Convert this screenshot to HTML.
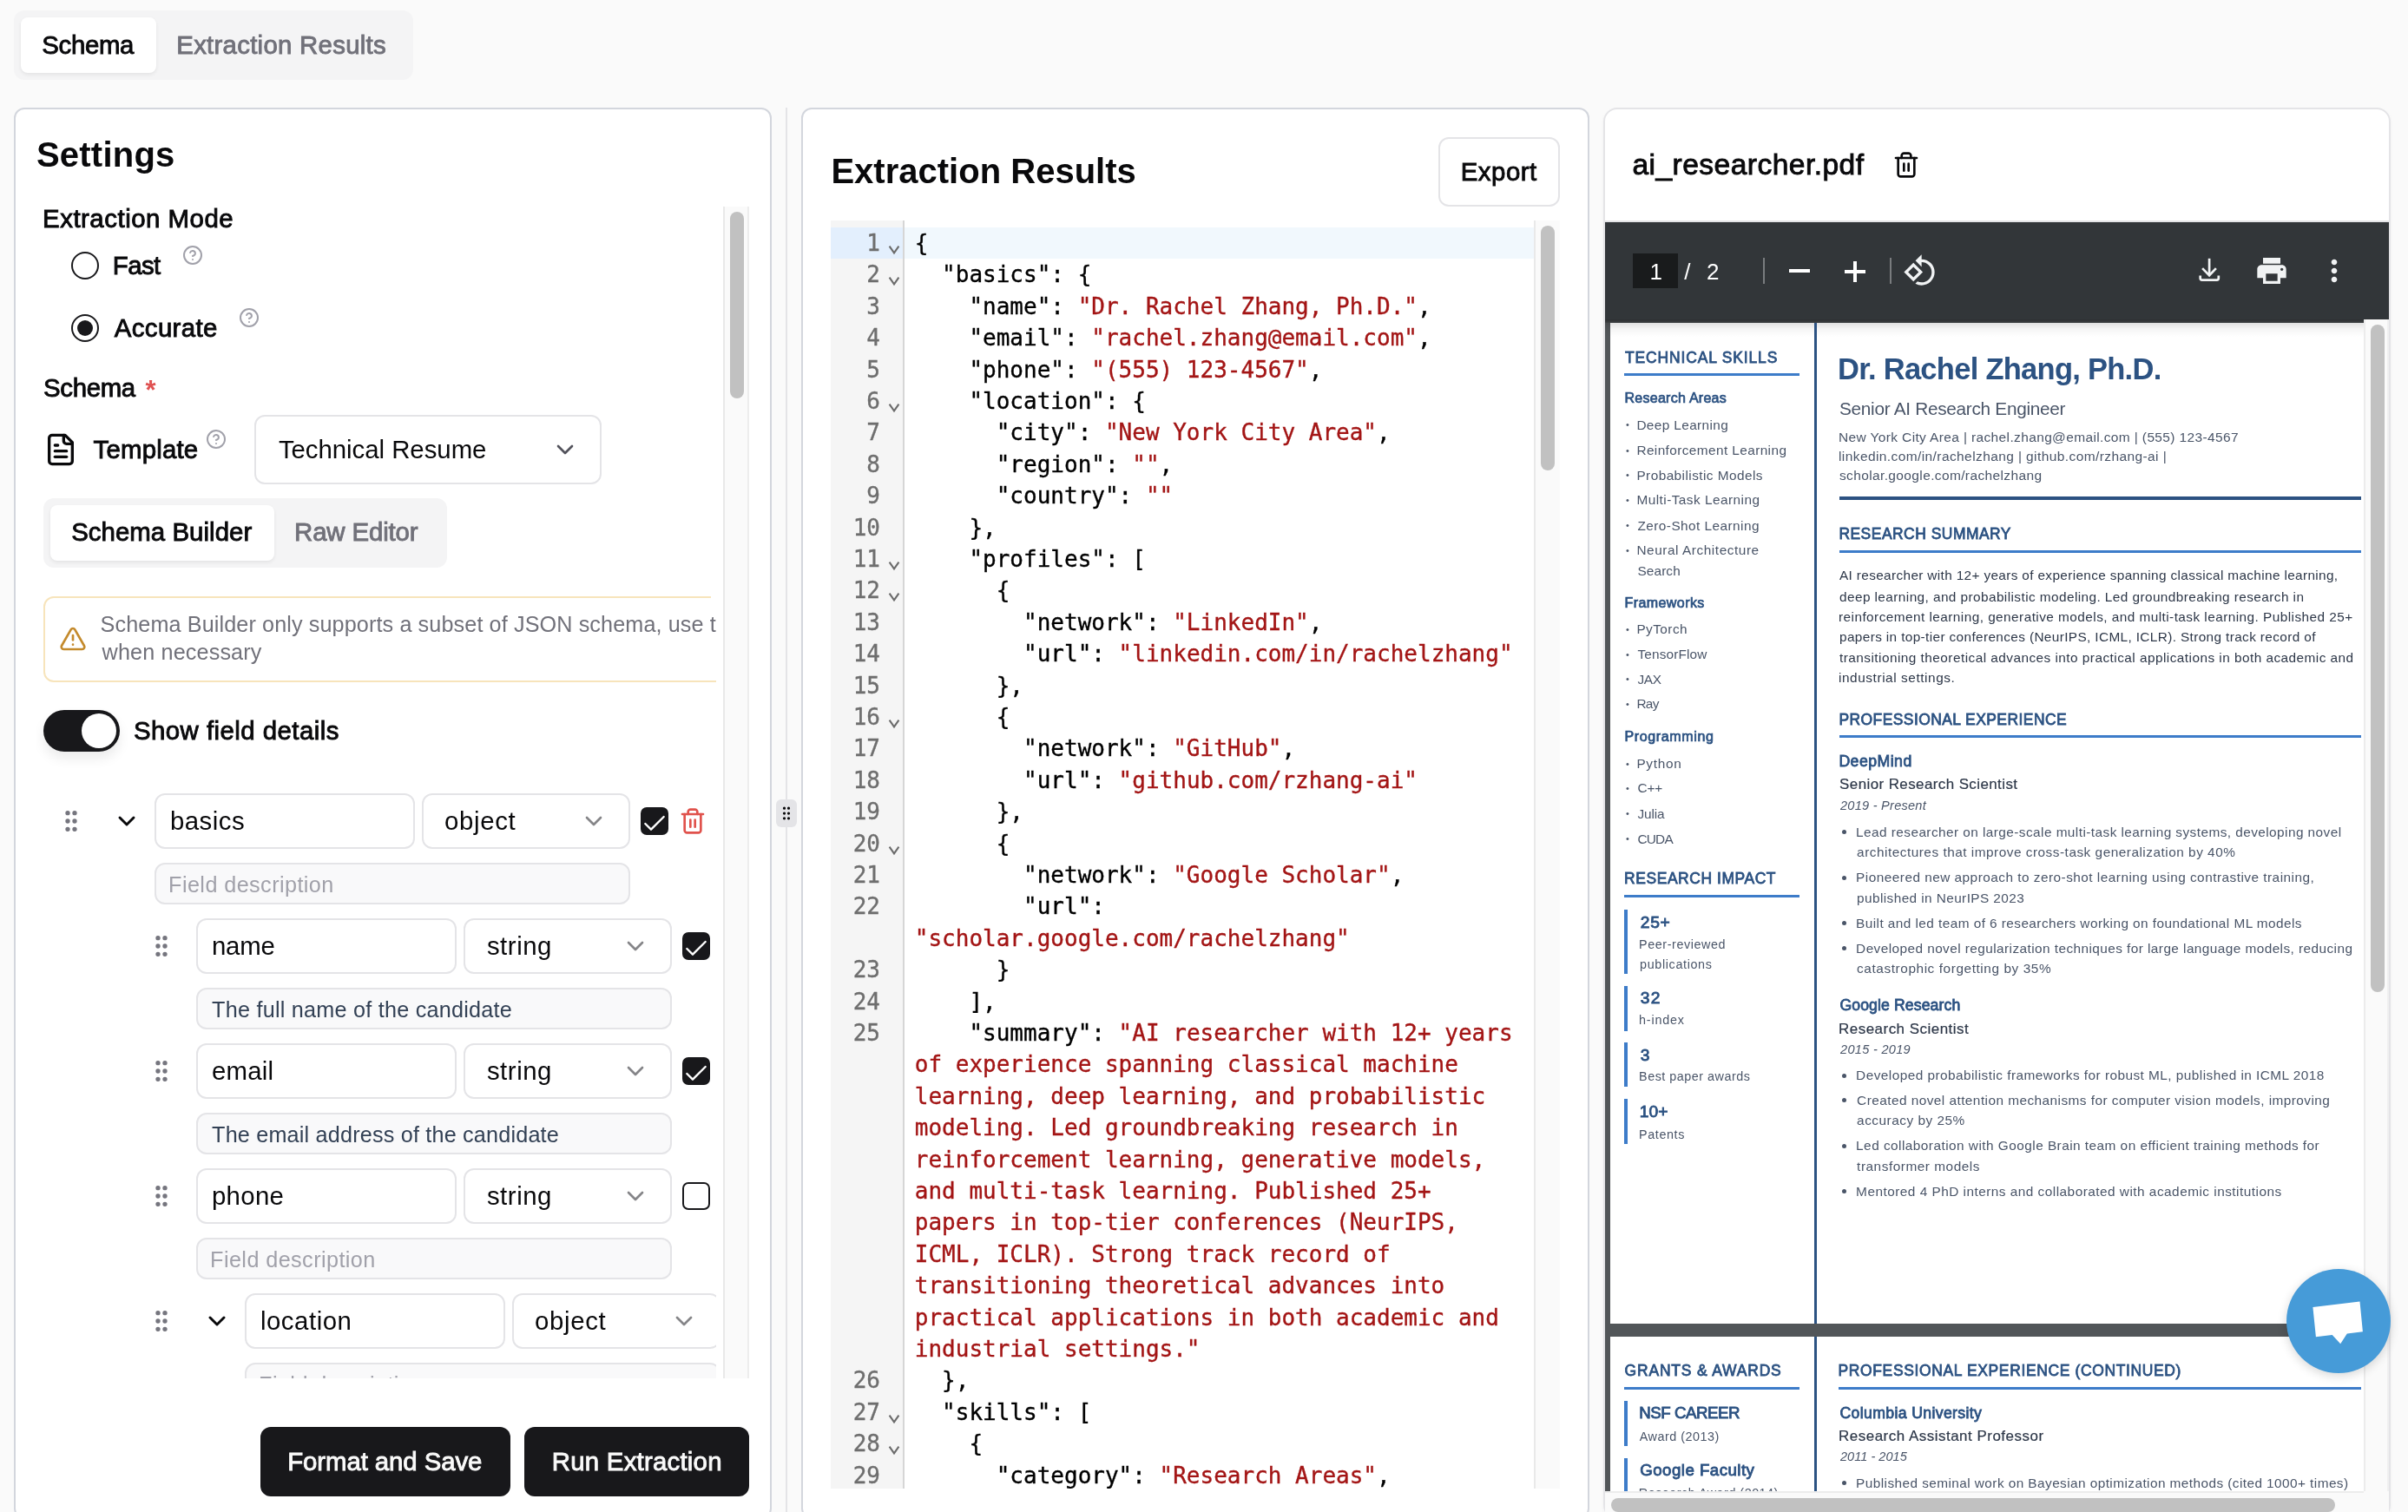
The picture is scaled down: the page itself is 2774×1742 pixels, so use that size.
<!DOCTYPE html>
<html lang="en"><head><meta charset="utf-8"><title>Extraction</title><style>
html,body{margin:0;padding:0}
body{width:2774px;height:1742px;overflow:hidden;background:#fafafa;position:relative;font-family:"Liberation Sans",sans-serif;color:#09090b}
div{position:absolute;box-sizing:border-box}
.t{position:absolute;white-space:pre;display:block}
.m{font-family:"DejaVu Sans Mono","Liberation Mono",monospace;-webkit-text-stroke:.35px}
</style></head><body>
<div id="root" style="left:0;top:0;width:2774px;height:1742px;will-change:transform">
<div style="left:16px;top:12px;width:460px;height:80px;background:#f4f4f5;border-radius:12px"></div>
<div style="left:24px;top:20px;width:156px;height:64px;background:#fff;border-radius:8px;box-shadow:0 2px 4px rgba(0,0,0,.07)"></div>
<span class="t" style="left: 48.25px; top: 33px; font-size: 29.4px; line-height: 38px; color: rgb(9, 9, 11); -webkit-text-stroke: 0.9px rgb(9, 9, 11); letter-spacing: -0.336px;">Schema</span>
<span class="t" style="left: 203.25px; top: 33px; font-size: 29.4px; line-height: 38px; color: rgb(113, 113, 122); -webkit-text-stroke: 0.9px rgb(113, 113, 122); letter-spacing: 0.273px;">Extraction Results</span>
<div style="left:16px;top:124px;width:873px;height:1626px;border:2px solid #d3d6dd;border-radius:12px;background:#fff"></div>
<span class="t" style="left: 41.9px; top: 152px; font-size: 40px; line-height: 52px; color: rgb(9, 9, 11); font-weight: 700; letter-spacing: 0.236px;">Settings</span>
<div style="left:905px;top:124px;width:2px;height:1640px;background:#e4e4e7"></div>
<div style="left:894px;top:921px;width:24px;height:32px;background:#e4e4e7;border-radius:6px"></div>
<svg style="position:absolute;left:896px;top:927px;" width="20" height="20" viewBox="0 0 24 24" fill="none" stroke="#09090b" stroke-width="1.9" stroke-linecap="round" stroke-linejoin="round"><circle cx="9" cy="12" r="1"></circle><circle cx="9" cy="5" r="1"></circle><circle cx="9" cy="19" r="1"></circle><circle cx="15" cy="12" r="1"></circle><circle cx="15" cy="5" r="1"></circle><circle cx="15" cy="19" r="1"></circle></svg>
<div style="left:833px;top:238px;width:30px;height:1350px;background:#fafafa;border-left:2px solid #e9e9e9;border-right:2px solid #ededed"></div>
<div style="left:841px;top:244px;width:16px;height:215px;background:#c1c1c1;border-radius:8px"></div>
<div style="left:42px;top:238px;width:783px;height:1350px;overflow:hidden">
<span class="t" style="left: 7.05px; top: -5px; font-size: 29.4px; line-height: 38px; color: rgb(9, 9, 11); -webkit-text-stroke: 0.9px rgb(9, 9, 11); letter-spacing: 0.519px;">Extraction Mode</span>
<div style="left:40px;top:52px;width:32px;height:32px;border:2px solid #18181b;border-radius:50%"></div>
<span class="t" style="left: 87.75px; top: 49px; font-size: 29.4px; line-height: 38px; color: rgb(9, 9, 11); -webkit-text-stroke: 0.9px rgb(9, 9, 11); letter-spacing: -0.569px;">Fast</span>
<div style="left:40px;top:124px;width:32px;height:32px;border:2px solid #18181b;border-radius:50%"></div>
<div style="left:47px;top:131px;width:18px;height:18px;background:#18181b;border-radius:50%"></div>
<span class="t" style="left: 89.75px; top: 121px; font-size: 29.4px; line-height: 38px; color: rgb(9, 9, 11); -webkit-text-stroke: 0.9px rgb(9, 9, 11); letter-spacing: 0.38px;">Accurate</span>
<svg style="position:absolute;left:168px;top:44px;" width="24" height="24" viewBox="0 0 24 24" fill="none" stroke="#a1a1aa" stroke-width="2" stroke-linecap="round" stroke-linejoin="round"><circle cx="12" cy="12" r="10"></circle><path d="M9.09 9a3 3 0 0 1 5.83 1c0 2-3 3-3 3"></path><path d="M12 17h.01"></path></svg>
<svg style="position:absolute;left:233px;top:116px;" width="24" height="24" viewBox="0 0 24 24" fill="none" stroke="#a1a1aa" stroke-width="2" stroke-linecap="round" stroke-linejoin="round"><circle cx="12" cy="12" r="10"></circle><path d="M9.09 9a3 3 0 0 1 5.83 1c0 2-3 3-3 3"></path><path d="M12 17h.01"></path></svg>
<span class="t" style="left: 8.05px; top: 190px; font-size: 29.4px; line-height: 38px; color: rgb(9, 9, 11); -webkit-text-stroke: 0.9px rgb(9, 9, 11); letter-spacing: -0.336px;">Schema</span>
<span class="t" style="left: 125.4px; top: 192px; font-size: 31px; line-height: 40px; color: rgb(224, 82, 82); font-weight: 700;">*</span>
<svg style="position:absolute;left:8px;top:260px;" width="40" height="40" viewBox="0 0 24 24" fill="none" stroke="#09090b" stroke-width="2" stroke-linecap="round" stroke-linejoin="round"><path d="M15 2H6a2 2 0 0 0-2 2v16a2 2 0 0 0 2 2h12a2 2 0 0 0 2-2V7Z"></path><path d="M14 2v4a2 2 0 0 0 2 2h4"></path><path d="M10 9H8"></path><path d="M16 13H8"></path><path d="M16 17H8"></path></svg>
<span class="t" style="left: 65.55px; top: 261px; font-size: 29.4px; line-height: 38px; color: rgb(9, 9, 11); -webkit-text-stroke: 0.9px rgb(9, 9, 11); letter-spacing: 0.197px;">Template</span>
<svg style="position:absolute;left:195px;top:256px;" width="24" height="24" viewBox="0 0 24 24" fill="none" stroke="#a1a1aa" stroke-width="2" stroke-linecap="round" stroke-linejoin="round"><circle cx="12" cy="12" r="10"></circle><path d="M9.09 9a3 3 0 0 1 5.83 1c0 2-3 3-3 3"></path><path d="M12 17h.01"></path></svg>
<div style="left:251px;top:240px;width:400px;height:80px;border:2px solid #e4e4e7;border-radius:12px;background:#fff"></div>
<span class="t" style="left: 278.9px; top: 261px; font-size: 29.4px; line-height: 38px; color: rgb(9, 9, 11); letter-spacing: -0.04px;">Technical Resume</span>
<svg style="position:absolute;left:592.5px;top:264px;" width="32" height="32" viewBox="0 0 24 24" fill="none" stroke="#52525b" stroke-width="2" stroke-linecap="round" stroke-linejoin="round"><path d="m6 9 6 6 6-6"></path></svg>
<div style="left:8px;top:336px;width:465px;height:80px;background:#f4f4f5;border-radius:12px"></div>
<div style="left:16px;top:344px;width:258px;height:64px;background:#fff;border-radius:8px;box-shadow:0 2px 4px rgba(0,0,0,.07)"></div>
<span class="t" style="left: 40.15px; top: 356px; font-size: 29.4px; line-height: 38px; color: rgb(9, 9, 11); -webkit-text-stroke: 0.9px rgb(9, 9, 11); letter-spacing: 0.046px;">Schema Builder</span>
<span class="t" style="left: 297.05px; top: 356px; font-size: 29.4px; line-height: 38px; color: rgb(113, 113, 122); -webkit-text-stroke: 0.9px rgb(113, 113, 122); letter-spacing: -0.129px;">Raw Editor</span>
<div style="left:8px;top:449px;width:790px;height:99px;border:2px solid #f7e4bb;border-radius:12px;background:#fff"></div>
<div style="left:776.5px;top:449px;width:8px;height:2px;background:#fff"></div>
<svg style="position:absolute;left:26px;top:482px;" width="32" height="32" viewBox="0 0 24 24" fill="none" stroke="#c48a2c" stroke-width="2" stroke-linecap="round" stroke-linejoin="round"><path d="m21.73 18-8-14a2 2 0 0 0-3.48 0l-8 14A2 2 0 0 0 4 21h16a2 2 0 0 0 1.73-3"></path><path d="M12 9v4"></path><path d="M12 17h.01"></path></svg>
<span class="t" style="left: 73.6px; top: 465px; font-size: 25.2px; line-height: 33px; color: rgb(113, 113, 122); letter-spacing: 0.11px;">Schema Builder only supports a subset of JSON schema, use t</span>
<span class="t" style="left: 785px; top: 465px; font-size: 25.2px; line-height: 33px; color: rgb(113, 113, 122);">he Raw Editor</span>
<span class="t" style="left: 75.6px; top: 497px; font-size: 25.2px; line-height: 33px; color: rgb(113, 113, 122); letter-spacing: 0.137px;">when necessary</span>
<div style="left:8px;top:580px;width:88px;height:48px;background:#18181b;border-radius:24px;box-shadow:0 8px 14px rgba(0,0,0,.08)"></div>
<div style="left:52px;top:584px;width:40px;height:40px;background:#fff;border-radius:50%"></div>
<span class="t" style="left: 111.95px; top: 585px; font-size: 29.4px; line-height: 38px; color: rgb(9, 9, 11); -webkit-text-stroke: 0.9px rgb(9, 9, 11); letter-spacing: 0.457px;">Show field details</span>
<svg style="position:absolute;left:24px;top:692px;" width="32" height="32" viewBox="0 0 24 24" fill="none" stroke="#75757e" stroke-width="2" stroke-linecap="round" stroke-linejoin="round"><circle cx="9" cy="12" r="1"></circle><circle cx="9" cy="5" r="1"></circle><circle cx="9" cy="19" r="1"></circle><circle cx="15" cy="12" r="1"></circle><circle cx="15" cy="5" r="1"></circle><circle cx="15" cy="19" r="1"></circle></svg>
<svg style="position:absolute;left:88px;top:692px;" width="32" height="32" viewBox="0 0 24 24" fill="none" stroke="#09090b" stroke-width="2.2" stroke-linecap="round" stroke-linejoin="round"><path d="m6 9 6 6 6-6"></path></svg>
<div style="left:136px;top:676px;width:300px;height:64px;border:2px solid #e4e4e7;border-radius:12px;background:#fff"></div>
<span class="t" style="left: 153.9px; top: 689px; font-size: 29.4px; line-height: 38px; color: rgb(9, 9, 11); letter-spacing: 0.517px;">basics</span>
<div style="left:444px;top:676px;width:240px;height:64px;border:2px solid #e4e4e7;border-radius:12px;background:#fff"></div>
<span class="t" style="left: 469.9px; top: 689px; font-size: 29.4px; line-height: 38px; color: rgb(9, 9, 11); letter-spacing: 0.686px;">object</span>
<svg style="position:absolute;left:626.2px;top:692px;" width="32" height="32" viewBox="0 0 24 24" fill="none" stroke="#858588" stroke-width="2" stroke-linecap="round" stroke-linejoin="round"><path d="m6 9 6 6 6-6"></path></svg>
<div style="left:696px;top:692px;width:32px;height:32px;background:#18181b;border-radius:7px"></div>
<svg style="position:absolute;left:696.4px;top:694.6px;" width="32" height="32" viewBox="0 0 24 24" fill="none" stroke="#fff" stroke-width="1.8" stroke-linecap="round" stroke-linejoin="round"><path d="M20 6 9 17l-5-5"></path></svg>
<svg style="position:absolute;left:740px;top:692px;" width="32" height="32" viewBox="0 0 24 24" fill="none" stroke="#e0524c" stroke-width="2" stroke-linecap="round" stroke-linejoin="round"><path d="M3 6h18"></path><path d="M19 6v14c0 1-1 2-2 2H7c-1 0-2-1-2-2V6"></path><path d="M8 6V4c0-1 1-2 2-2h4c1 0 2 1 2 2v2"></path><line x1="10" x2="10" y1="11" y2="17"></line><line x1="14" x2="14" y1="11" y2="17"></line></svg>
<div style="left:136px;top:756px;width:548px;height:48px;border:2px solid #e4e4e7;border-radius:12px;background:#f9f9fa"></div>
<span class="t" style="left: 152.1px; top: 765px; font-size: 25.2px; line-height: 33px; color: rgb(161, 161, 170); letter-spacing: 0.425px;">Field description</span>
<svg style="position:absolute;left:128px;top:836px;" width="32" height="32" viewBox="0 0 24 24" fill="none" stroke="#75757e" stroke-width="2" stroke-linecap="round" stroke-linejoin="round"><circle cx="9" cy="12" r="1"></circle><circle cx="9" cy="5" r="1"></circle><circle cx="9" cy="19" r="1"></circle><circle cx="15" cy="12" r="1"></circle><circle cx="15" cy="5" r="1"></circle><circle cx="15" cy="19" r="1"></circle></svg>
<div style="left:184px;top:820px;width:300px;height:64px;border:2px solid #e4e4e7;border-radius:12px;background:#fff"></div>
<span class="t" style="left: 201.9px; top: 833px; font-size: 29.4px; line-height: 38px; color: rgb(9, 9, 11); letter-spacing: -0.162px;">name</span>
<div style="left:492px;top:820px;width:240px;height:64px;border:2px solid #e4e4e7;border-radius:12px;background:#fff"></div>
<span class="t" style="left: 518.9px; top: 833px; font-size: 29.4px; line-height: 38px; color: rgb(9, 9, 11); letter-spacing: 0.534px;">string</span>
<svg style="position:absolute;left:674.2px;top:836px;" width="32" height="32" viewBox="0 0 24 24" fill="none" stroke="#858588" stroke-width="2" stroke-linecap="round" stroke-linejoin="round"><path d="m6 9 6 6 6-6"></path></svg>
<div style="left:744px;top:836px;width:32px;height:32px;background:#18181b;border-radius:7px"></div>
<svg style="position:absolute;left:744.4px;top:838.6px;" width="32" height="32" viewBox="0 0 24 24" fill="none" stroke="#fff" stroke-width="1.8" stroke-linecap="round" stroke-linejoin="round"><path d="M20 6 9 17l-5-5"></path></svg>
<div style="left:184px;top:900px;width:548px;height:48px;border:2px solid #e4e4e7;border-radius:12px;background:#f9f9fa"></div>
<span class="t" style="left: 202.1px; top: 909px; font-size: 25.2px; line-height: 33px; color: rgb(51, 65, 85); letter-spacing: 0.236px;">The full name of the candidate</span>
<svg style="position:absolute;left:128px;top:980px;" width="32" height="32" viewBox="0 0 24 24" fill="none" stroke="#75757e" stroke-width="2" stroke-linecap="round" stroke-linejoin="round"><circle cx="9" cy="12" r="1"></circle><circle cx="9" cy="5" r="1"></circle><circle cx="9" cy="19" r="1"></circle><circle cx="15" cy="12" r="1"></circle><circle cx="15" cy="5" r="1"></circle><circle cx="15" cy="19" r="1"></circle></svg>
<div style="left:184px;top:964px;width:300px;height:64px;border:2px solid #e4e4e7;border-radius:12px;background:#fff"></div>
<span class="t" style="left: 201.9px; top: 977px; font-size: 29.4px; line-height: 38px; color: rgb(9, 9, 11); letter-spacing: 0.249px;">email</span>
<div style="left:492px;top:964px;width:240px;height:64px;border:2px solid #e4e4e7;border-radius:12px;background:#fff"></div>
<span class="t" style="left: 518.9px; top: 977px; font-size: 29.4px; line-height: 38px; color: rgb(9, 9, 11); letter-spacing: 0.534px;">string</span>
<svg style="position:absolute;left:674.2px;top:980px;" width="32" height="32" viewBox="0 0 24 24" fill="none" stroke="#858588" stroke-width="2" stroke-linecap="round" stroke-linejoin="round"><path d="m6 9 6 6 6-6"></path></svg>
<div style="left:744px;top:980px;width:32px;height:32px;background:#18181b;border-radius:7px"></div>
<svg style="position:absolute;left:744.4px;top:982.6px;" width="32" height="32" viewBox="0 0 24 24" fill="none" stroke="#fff" stroke-width="1.8" stroke-linecap="round" stroke-linejoin="round"><path d="M20 6 9 17l-5-5"></path></svg>
<div style="left:184px;top:1044px;width:548px;height:48px;border:2px solid #e4e4e7;border-radius:12px;background:#f9f9fa"></div>
<span class="t" style="left: 202.1px; top: 1053px; font-size: 25.2px; line-height: 33px; color: rgb(51, 65, 85); letter-spacing: 0.19px;">The email address of the candidate</span>
<svg style="position:absolute;left:128px;top:1124px;" width="32" height="32" viewBox="0 0 24 24" fill="none" stroke="#75757e" stroke-width="2" stroke-linecap="round" stroke-linejoin="round"><circle cx="9" cy="12" r="1"></circle><circle cx="9" cy="5" r="1"></circle><circle cx="9" cy="19" r="1"></circle><circle cx="15" cy="12" r="1"></circle><circle cx="15" cy="5" r="1"></circle><circle cx="15" cy="19" r="1"></circle></svg>
<div style="left:184px;top:1108px;width:300px;height:64px;border:2px solid #e4e4e7;border-radius:12px;background:#fff"></div>
<span class="t" style="left: 201.9px; top: 1121px; font-size: 29.4px; line-height: 38px; color: rgb(9, 9, 11); letter-spacing: 0.328px;">phone</span>
<div style="left:492px;top:1108px;width:240px;height:64px;border:2px solid #e4e4e7;border-radius:12px;background:#fff"></div>
<span class="t" style="left: 518.9px; top: 1121px; font-size: 29.4px; line-height: 38px; color: rgb(9, 9, 11); letter-spacing: 0.534px;">string</span>
<svg style="position:absolute;left:674.2px;top:1124px;" width="32" height="32" viewBox="0 0 24 24" fill="none" stroke="#858588" stroke-width="2" stroke-linecap="round" stroke-linejoin="round"><path d="m6 9 6 6 6-6"></path></svg>
<div style="left:744px;top:1124px;width:32px;height:32px;border:2px solid #18181b;border-radius:7px;background:#fff"></div>
<div style="left:184px;top:1188px;width:548px;height:48px;border:2px solid #e4e4e7;border-radius:12px;background:#f9f9fa"></div>
<span class="t" style="left: 200.1px; top: 1197px; font-size: 25.2px; line-height: 33px; color: rgb(161, 161, 170); letter-spacing: 0.425px;">Field description</span>
<svg style="position:absolute;left:128px;top:1268px;" width="32" height="32" viewBox="0 0 24 24" fill="none" stroke="#75757e" stroke-width="2" stroke-linecap="round" stroke-linejoin="round"><circle cx="9" cy="12" r="1"></circle><circle cx="9" cy="5" r="1"></circle><circle cx="9" cy="19" r="1"></circle><circle cx="15" cy="12" r="1"></circle><circle cx="15" cy="5" r="1"></circle><circle cx="15" cy="19" r="1"></circle></svg>
<svg style="position:absolute;left:192px;top:1268px;" width="32" height="32" viewBox="0 0 24 24" fill="none" stroke="#09090b" stroke-width="2.2" stroke-linecap="round" stroke-linejoin="round"><path d="m6 9 6 6 6-6"></path></svg>
<div style="left:240px;top:1252px;width:300px;height:64px;border:2px solid #e4e4e7;border-radius:12px;background:#fff"></div>
<span class="t" style="left: 257.9px; top: 1265px; font-size: 29.4px; line-height: 38px; color: rgb(9, 9, 11); letter-spacing: 0.533px;">location</span>
<div style="left:548px;top:1252px;width:240px;height:64px;border:2px solid #e4e4e7;border-radius:12px;background:#fff"></div>
<span class="t" style="left: 573.9px; top: 1265px; font-size: 29.4px; line-height: 38px; color: rgb(9, 9, 11); letter-spacing: 0.686px;">object</span>
<svg style="position:absolute;left:730.2px;top:1268px;" width="32" height="32" viewBox="0 0 24 24" fill="none" stroke="#858588" stroke-width="2" stroke-linecap="round" stroke-linejoin="round"><path d="m6 9 6 6 6-6"></path></svg>
<div style="left:800px;top:1268px;width:32px;height:32px;border:2px solid #18181b;border-radius:7px;background:#fff"></div>
<div style="left:240px;top:1332px;width:548px;height:48px;border:2px solid #e4e4e7;border-radius:12px;background:#f9f9fa"></div>
<span class="t" style="left: 256.1px; top: 1341px; font-size: 25.2px; line-height: 33px; color: rgb(161, 161, 170); letter-spacing: 0.425px;">Field description</span>
</div>
<div style="left:300px;top:1644px;width:288px;height:80px;background:#18181b;border-radius:12px"></div>
<span class="t" style="left: 331.25px; top: 1665px; font-size: 29.4px; line-height: 38px; color: rgb(250, 250, 250); -webkit-text-stroke: 0.9px rgb(250, 250, 250); letter-spacing: -0.093px;">Format and Save</span>
<div style="left:604px;top:1644px;width:259px;height:80px;background:#18181b;border-radius:12px"></div>
<span class="t" style="left: 635.85px; top: 1665px; font-size: 29.4px; line-height: 38px; color: rgb(250, 250, 250); -webkit-text-stroke: 0.9px rgb(250, 250, 250); letter-spacing: 0.222px;">Run Extraction</span>
<div style="left:923px;top:124px;width:908px;height:1626px;border:2px solid #d3d6dd;border-radius:12px;background:#fff"></div>
<span class="t" style="left: 957.4px; top: 171px; font-size: 40px; line-height: 52px; color: rgb(9, 9, 11); font-weight: 700; letter-spacing: 0.013px;">Extraction Results</span>
<div style="left:1657px;top:158px;width:140px;height:80px;border:2px solid #e4e4e7;border-radius:12px;background:#fff"></div>
<span class="t" style="left: 1682.75px; top: 179px; font-size: 29.4px; line-height: 38px; color: rgb(9, 9, 11); -webkit-text-stroke: 0.9px rgb(9, 9, 11); letter-spacing: 0.503px;">Export</span>
<div style="left:957px;top:254px;width:840px;height:1461px;overflow:hidden;background:#fff">
<div style="left:0px;top:0px;width:83px;height:1461px;background:#f5f5f5"></div>
<div style="left:83px;top:0px;width:2px;height:1461px;background:#d6d6d6"></div>
<div style="left:0px;top:8px;width:83px;height:36px;background:#e3effd"></div>
<div style="left:85px;top:8px;width:725px;height:36px;background:#f1f8fd"></div>
<div style="left:810px;top:0px;width:30px;height:1461px;background:#fafafa;border-left:2px solid #e9e9e9"></div>
<div style="left:818px;top:6px;width:16px;height:282px;background:#c1c1c1;border-radius:8px"></div>
<span class="t m" style="top:8.0px;height:36.4px;line-height:36.4px;font-size:26px;left:0px;width:57px;text-align:right;color:#6e6e6e">1</span>
<svg style="position:absolute;left:65px;top:27.0px" width="16" height="14" viewBox="0 0 16 14" fill="none" stroke="#6b6b6b" stroke-width="2.1"><path d="M2.6 2.6 L8 10.4 L13.4 2.6"></path></svg>
<span class="t m" style="top:8.0px;height:36.4px;line-height:36.4px;font-size:26px;left:96.79999999999995px;color:#000">{</span>
<span class="t m" style="top:44.4px;height:36.4px;line-height:36.4px;font-size:26px;left:0px;width:57px;text-align:right;color:#6e6e6e">2</span>
<svg style="position:absolute;left:65px;top:63.4px" width="16" height="14" viewBox="0 0 16 14" fill="none" stroke="#6b6b6b" stroke-width="2.1"><path d="M2.6 2.6 L8 10.4 L13.4 2.6"></path></svg>
<span class="t m" style="top:44.4px;height:36.4px;line-height:36.4px;font-size:26px;left:96.79999999999995px;color:#000">  "basics": {</span>
<span class="t m" style="top:80.8px;height:36.4px;line-height:36.4px;font-size:26px;left:0px;width:57px;text-align:right;color:#6e6e6e">3</span>
<span class="t m" style="top:80.8px;height:36.4px;line-height:36.4px;font-size:26px;left:96.79999999999995px;color:#000">    "name": <span style="color:#a31515">"Dr. Rachel Zhang, Ph.D."</span>,</span>
<span class="t m" style="top:117.2px;height:36.4px;line-height:36.4px;font-size:26px;left:0px;width:57px;text-align:right;color:#6e6e6e">4</span>
<span class="t m" style="top:117.2px;height:36.4px;line-height:36.4px;font-size:26px;left:96.79999999999995px;color:#000">    "email": <span style="color:#a31515">"rachel.zhang@email.com"</span>,</span>
<span class="t m" style="top:153.6px;height:36.4px;line-height:36.4px;font-size:26px;left:0px;width:57px;text-align:right;color:#6e6e6e">5</span>
<span class="t m" style="top:153.6px;height:36.4px;line-height:36.4px;font-size:26px;left:96.79999999999995px;color:#000">    "phone": <span style="color:#a31515">"(555) 123-4567"</span>,</span>
<span class="t m" style="top:190.0px;height:36.4px;line-height:36.4px;font-size:26px;left:0px;width:57px;text-align:right;color:#6e6e6e">6</span>
<svg style="position:absolute;left:65px;top:209.0px" width="16" height="14" viewBox="0 0 16 14" fill="none" stroke="#6b6b6b" stroke-width="2.1"><path d="M2.6 2.6 L8 10.4 L13.4 2.6"></path></svg>
<span class="t m" style="top:190.0px;height:36.4px;line-height:36.4px;font-size:26px;left:96.79999999999995px;color:#000">    "location": {</span>
<span class="t m" style="top:226.4px;height:36.4px;line-height:36.4px;font-size:26px;left:0px;width:57px;text-align:right;color:#6e6e6e">7</span>
<span class="t m" style="top:226.4px;height:36.4px;line-height:36.4px;font-size:26px;left:96.79999999999995px;color:#000">      "city": <span style="color:#a31515">"New York City Area"</span>,</span>
<span class="t m" style="top:262.8px;height:36.4px;line-height:36.4px;font-size:26px;left:0px;width:57px;text-align:right;color:#6e6e6e">8</span>
<span class="t m" style="top:262.8px;height:36.4px;line-height:36.4px;font-size:26px;left:96.79999999999995px;color:#000">      "region": <span style="color:#a31515">""</span>,</span>
<span class="t m" style="top:299.2px;height:36.4px;line-height:36.4px;font-size:26px;left:0px;width:57px;text-align:right;color:#6e6e6e">9</span>
<span class="t m" style="top:299.2px;height:36.4px;line-height:36.4px;font-size:26px;left:96.79999999999995px;color:#000">      "country": <span style="color:#a31515">""</span></span>
<span class="t m" style="top:335.6px;height:36.4px;line-height:36.4px;font-size:26px;left:0px;width:57px;text-align:right;color:#6e6e6e">10</span>
<span class="t m" style="top:335.6px;height:36.4px;line-height:36.4px;font-size:26px;left:96.79999999999995px;color:#000">    },</span>
<span class="t m" style="top:372.0px;height:36.4px;line-height:36.4px;font-size:26px;left:0px;width:57px;text-align:right;color:#6e6e6e">11</span>
<svg style="position:absolute;left:65px;top:391.0px" width="16" height="14" viewBox="0 0 16 14" fill="none" stroke="#6b6b6b" stroke-width="2.1"><path d="M2.6 2.6 L8 10.4 L13.4 2.6"></path></svg>
<span class="t m" style="top:372.0px;height:36.4px;line-height:36.4px;font-size:26px;left:96.79999999999995px;color:#000">    "profiles": [</span>
<span class="t m" style="top:408.4px;height:36.4px;line-height:36.4px;font-size:26px;left:0px;width:57px;text-align:right;color:#6e6e6e">12</span>
<svg style="position:absolute;left:65px;top:427.4px" width="16" height="14" viewBox="0 0 16 14" fill="none" stroke="#6b6b6b" stroke-width="2.1"><path d="M2.6 2.6 L8 10.4 L13.4 2.6"></path></svg>
<span class="t m" style="top:408.4px;height:36.4px;line-height:36.4px;font-size:26px;left:96.79999999999995px;color:#000">      {</span>
<span class="t m" style="top:444.8px;height:36.4px;line-height:36.4px;font-size:26px;left:0px;width:57px;text-align:right;color:#6e6e6e">13</span>
<span class="t m" style="top:444.8px;height:36.4px;line-height:36.4px;font-size:26px;left:96.79999999999995px;color:#000">        "network": <span style="color:#a31515">"LinkedIn"</span>,</span>
<span class="t m" style="top:481.2px;height:36.4px;line-height:36.4px;font-size:26px;left:0px;width:57px;text-align:right;color:#6e6e6e">14</span>
<span class="t m" style="top:481.2px;height:36.4px;line-height:36.4px;font-size:26px;left:96.79999999999995px;color:#000">        "url": <span style="color:#a31515">"linkedin.com/in/rachelzhang"</span></span>
<span class="t m" style="top:517.6px;height:36.4px;line-height:36.4px;font-size:26px;left:0px;width:57px;text-align:right;color:#6e6e6e">15</span>
<span class="t m" style="top:517.6px;height:36.4px;line-height:36.4px;font-size:26px;left:96.79999999999995px;color:#000">      },</span>
<span class="t m" style="top:554.0px;height:36.4px;line-height:36.4px;font-size:26px;left:0px;width:57px;text-align:right;color:#6e6e6e">16</span>
<svg style="position:absolute;left:65px;top:573.0px" width="16" height="14" viewBox="0 0 16 14" fill="none" stroke="#6b6b6b" stroke-width="2.1"><path d="M2.6 2.6 L8 10.4 L13.4 2.6"></path></svg>
<span class="t m" style="top:554.0px;height:36.4px;line-height:36.4px;font-size:26px;left:96.79999999999995px;color:#000">      {</span>
<span class="t m" style="top:590.4px;height:36.4px;line-height:36.4px;font-size:26px;left:0px;width:57px;text-align:right;color:#6e6e6e">17</span>
<span class="t m" style="top:590.4px;height:36.4px;line-height:36.4px;font-size:26px;left:96.79999999999995px;color:#000">        "network": <span style="color:#a31515">"GitHub"</span>,</span>
<span class="t m" style="top:626.8px;height:36.4px;line-height:36.4px;font-size:26px;left:0px;width:57px;text-align:right;color:#6e6e6e">18</span>
<span class="t m" style="top:626.8px;height:36.4px;line-height:36.4px;font-size:26px;left:96.79999999999995px;color:#000">        "url": <span style="color:#a31515">"github.com/rzhang-ai"</span></span>
<span class="t m" style="top:663.2px;height:36.4px;line-height:36.4px;font-size:26px;left:0px;width:57px;text-align:right;color:#6e6e6e">19</span>
<span class="t m" style="top:663.2px;height:36.4px;line-height:36.4px;font-size:26px;left:96.79999999999995px;color:#000">      },</span>
<span class="t m" style="top:699.6px;height:36.4px;line-height:36.4px;font-size:26px;left:0px;width:57px;text-align:right;color:#6e6e6e">20</span>
<svg style="position:absolute;left:65px;top:718.6px" width="16" height="14" viewBox="0 0 16 14" fill="none" stroke="#6b6b6b" stroke-width="2.1"><path d="M2.6 2.6 L8 10.4 L13.4 2.6"></path></svg>
<span class="t m" style="top:699.6px;height:36.4px;line-height:36.4px;font-size:26px;left:96.79999999999995px;color:#000">      {</span>
<span class="t m" style="top:736.0px;height:36.4px;line-height:36.4px;font-size:26px;left:0px;width:57px;text-align:right;color:#6e6e6e">21</span>
<span class="t m" style="top:736.0px;height:36.4px;line-height:36.4px;font-size:26px;left:96.79999999999995px;color:#000">        "network": <span style="color:#a31515">"Google Scholar"</span>,</span>
<span class="t m" style="top:772.4px;height:36.4px;line-height:36.4px;font-size:26px;left:0px;width:57px;text-align:right;color:#6e6e6e">22</span>
<span class="t m" style="top:772.4px;height:36.4px;line-height:36.4px;font-size:26px;left:96.79999999999995px;color:#000">        "url": </span>
<span class="t m" style="top:808.8px;height:36.4px;line-height:36.4px;font-size:26px;left:96.79999999999995px;color:#000"><span style="color:#a31515">"scholar.google.com/rachelzhang"</span></span>
<span class="t m" style="top:845.2px;height:36.4px;line-height:36.4px;font-size:26px;left:0px;width:57px;text-align:right;color:#6e6e6e">23</span>
<span class="t m" style="top:845.2px;height:36.4px;line-height:36.4px;font-size:26px;left:96.79999999999995px;color:#000">      }</span>
<span class="t m" style="top:881.6px;height:36.4px;line-height:36.4px;font-size:26px;left:0px;width:57px;text-align:right;color:#6e6e6e">24</span>
<span class="t m" style="top:881.6px;height:36.4px;line-height:36.4px;font-size:26px;left:96.79999999999995px;color:#000">    ],</span>
<span class="t m" style="top:918.0px;height:36.4px;line-height:36.4px;font-size:26px;left:0px;width:57px;text-align:right;color:#6e6e6e">25</span>
<span class="t m" style="top:918.0px;height:36.4px;line-height:36.4px;font-size:26px;left:96.79999999999995px;color:#000">    "summary": <span style="color:#a31515">"AI researcher with 12+ years</span></span>
<span class="t m" style="top:954.4px;height:36.4px;line-height:36.4px;font-size:26px;left:96.79999999999995px;color:#000"><span style="color:#a31515">of experience spanning classical machine</span></span>
<span class="t m" style="top:990.8px;height:36.4px;line-height:36.4px;font-size:26px;left:96.79999999999995px;color:#000"><span style="color:#a31515">learning, deep learning, and probabilistic</span></span>
<span class="t m" style="top:1027.2px;height:36.4px;line-height:36.4px;font-size:26px;left:96.79999999999995px;color:#000"><span style="color:#a31515">modeling. Led groundbreaking research in</span></span>
<span class="t m" style="top:1063.6px;height:36.4px;line-height:36.4px;font-size:26px;left:96.79999999999995px;color:#000"><span style="color:#a31515">reinforcement learning, generative models,</span></span>
<span class="t m" style="top:1100.0px;height:36.4px;line-height:36.4px;font-size:26px;left:96.79999999999995px;color:#000"><span style="color:#a31515">and multi-task learning. Published 25+</span></span>
<span class="t m" style="top:1136.4px;height:36.4px;line-height:36.4px;font-size:26px;left:96.79999999999995px;color:#000"><span style="color:#a31515">papers in top-tier conferences (NeurIPS,</span></span>
<span class="t m" style="top:1172.8px;height:36.4px;line-height:36.4px;font-size:26px;left:96.79999999999995px;color:#000"><span style="color:#a31515">ICML, ICLR). Strong track record of</span></span>
<span class="t m" style="top:1209.2px;height:36.4px;line-height:36.4px;font-size:26px;left:96.79999999999995px;color:#000"><span style="color:#a31515">transitioning theoretical advances into</span></span>
<span class="t m" style="top:1245.6px;height:36.4px;line-height:36.4px;font-size:26px;left:96.79999999999995px;color:#000"><span style="color:#a31515">practical applications in both academic and</span></span>
<span class="t m" style="top:1282.0px;height:36.4px;line-height:36.4px;font-size:26px;left:96.79999999999995px;color:#000"><span style="color:#a31515">industrial settings."</span></span>
<span class="t m" style="top:1318.4px;height:36.4px;line-height:36.4px;font-size:26px;left:0px;width:57px;text-align:right;color:#6e6e6e">26</span>
<span class="t m" style="top:1318.4px;height:36.4px;line-height:36.4px;font-size:26px;left:96.79999999999995px;color:#000">  },</span>
<span class="t m" style="top:1354.8px;height:36.4px;line-height:36.4px;font-size:26px;left:0px;width:57px;text-align:right;color:#6e6e6e">27</span>
<svg style="position:absolute;left:65px;top:1373.8px" width="16" height="14" viewBox="0 0 16 14" fill="none" stroke="#6b6b6b" stroke-width="2.1"><path d="M2.6 2.6 L8 10.4 L13.4 2.6"></path></svg>
<span class="t m" style="top:1354.8px;height:36.4px;line-height:36.4px;font-size:26px;left:96.79999999999995px;color:#000">  "skills": [</span>
<span class="t m" style="top:1391.2px;height:36.4px;line-height:36.4px;font-size:26px;left:0px;width:57px;text-align:right;color:#6e6e6e">28</span>
<svg style="position:absolute;left:65px;top:1410.2px" width="16" height="14" viewBox="0 0 16 14" fill="none" stroke="#6b6b6b" stroke-width="2.1"><path d="M2.6 2.6 L8 10.4 L13.4 2.6"></path></svg>
<span class="t m" style="top:1391.2px;height:36.4px;line-height:36.4px;font-size:26px;left:96.79999999999995px;color:#000">    {</span>
<span class="t m" style="top:1427.6px;height:36.4px;line-height:36.4px;font-size:26px;left:0px;width:57px;text-align:right;color:#6e6e6e">29</span>
<span class="t m" style="top:1427.6px;height:36.4px;line-height:36.4px;font-size:26px;left:96.79999999999995px;color:#000">      "category": <span style="color:#a31515">"Research Areas"</span>,</span>
</div>
<div style="left:1847px;top:124px;width:907px;height:1626px;border:2px solid #e4e4e7;border-radius:16px;background:#fff;box-shadow:0 2px 4px rgba(0,0,0,.04)"></div>
<span class="t" style="left: 1880.45px; top: 168px; font-size: 33.6px; line-height: 44px; color: rgb(9, 9, 11); -webkit-text-stroke: 0.9px rgb(9, 9, 11); letter-spacing: 0.448px;">ai_researcher.pdf</span>
<svg style="position:absolute;left:2180px;top:174px;" width="32" height="32" viewBox="0 0 24 24" fill="none" stroke="#09090b" stroke-width="2" stroke-linecap="round" stroke-linejoin="round"><path d="M3 6h18"></path><path d="M19 6v14c0 1-1 2-2 2H7c-1 0-2-1-2-2V6"></path><path d="M8 6V4c0-1 1-2 2-2h4c1 0 2 1 2 2v2"></path><line x1="10" x2="10" y1="11" y2="17"></line><line x1="14" x2="14" y1="11" y2="17"></line></svg>
<div style="left:1849px;top:254px;width:903px;height:2px;background:#e4e4e7"></div>
<div style="left:1849px;top:256px;width:903px;height:112px;background:#323639"></div>
<div style="left:1881px;top:292px;width:52px;height:40px;background:#191b1c"></div>
<span class="t" style="left: 1900.5px; top: 296px; font-size: 26px; line-height: 34px; color: rgb(255, 255, 255);">1</span>
<span class="t" style="left: 1940.3px; top: 296px; font-size: 26px; line-height: 34px; color: rgb(255, 255, 255);">/</span>
<span class="t" style="left: 1966px; top: 296px; font-size: 26px; line-height: 34px; color: rgb(255, 255, 255);">2</span>
<div style="left:2031px;top:297px;width:2px;height:30px;background:rgba(255,255,255,.35)"></div>
<div style="left:2177px;top:297px;width:2px;height:30px;background:rgba(255,255,255,.35)"></div>
<div style="left:2061px;top:310px;width:24px;height:4px;background:#fff"></div>
<div style="left:2125px;top:310.5px;width:24px;height:4px;background:#fff"></div>
<div style="left:2135px;top:300.5px;width:4px;height:24px;background:#fff"></div>
<svg style="position:absolute;left:2191.5px;top:292.3px" width="40" height="40" viewBox="0 0 24 24" fill="#f1f3f4"><path d="M7.34 6.41L.86 12.9l6.49 6.48 6.49-6.48-6.5-6.49zM3.69 12.9l3.66-3.66L11 12.9l-3.66 3.66-3.65-3.66zm15.67-6.26C17.61 4.88 15.3 4 13 4V.76L8.76 5 13 9.24V6c1.79 0 3.58.68 4.95 2.05 2.73 2.73 2.73 7.17 0 9.9C16.58 19.32 14.79 20 13 20c-.97 0-1.94-.21-2.84-.61l-1.49 1.49C10.02 21.62 11.51 22 13 22c2.3 0 4.61-.88 6.36-2.64 3.52-3.51 3.52-9.21 0-12.72z"></path></svg>
<svg style="position:absolute;left:2525px;top:291px" width="40" height="40" viewBox="0 0 40 40" fill="none" stroke="#f1f3f4" stroke-width="2.7"><path d="M20.1 6.8V26"></path><path d="M12.1 18.1L20.1 26.3L27.9 18.1"></path><path d="M9.7 26.6V29.6a2 2 0 0 0 2 2H28.8a2 2 0 0 0 2-2V26.6"></path></svg>
<svg style="position:absolute;left:2596.5px;top:292.2px" width="40" height="40" viewBox="0 0 24 24" fill="#f1f3f4"><path d="M19 8H5c-1.66 0-3 1.34-3 3v6h4v4h12v-4h4v-6c0-1.66-1.34-3-3-3zm-3 11H8v-5h8v5zm3-7c-.55 0-1-.45-1-1s.45-1 1-1 1 .45 1 1-.45 1-1 1zm-1-9H6v4h12V3z"></path></svg>
<svg style="position:absolute;left:2669px;top:292px" width="40" height="40" viewBox="0 0 24 24" fill="#f1f3f4"><path d="M12 8c1.1 0 2-.9 2-2s-.9-2-2-2-2 .9-2 2 .9 2 2 2zm0 2c-1.1 0-2 .9-2 2s.9 2 2 2 2-.9 2-2-.9-2-2-2zm0 6c-1.1 0-2 .9-2 2s.9 2 2 2 2-.9 2-2-.9-2-2-2z"></path></svg>
<div style="left:1849px;top:368px;width:903px;height:1350px;overflow:hidden;background:#525659">
<div style="left:6px;top:3.5px;width:868px;height:1153.1px;background:#fff"></div>
<div style="left:6px;top:1171.5px;width:868px;height:400px;background:#fff"></div>
<div style="left:0px;top:0px;width:874px;height:20px;background:linear-gradient(rgba(0,0,0,.45),rgba(0,0,0,.3) 17%,rgba(0,0,0,.12) 19%,rgba(0,0,0,.04) 55%,rgba(0,0,0,0))"></div>
<div style="left:241px;top:3.5px;width:3px;height:1153.1px;background:#2c5282"></div>
<div style="left:241px;top:1171.5px;width:3px;height:400px;background:#2c5282"></div>
<div style="left:874px;top:0px;width:29px;height:1350px;background:#fafafa;border-left:2px solid #ececec;border-right:2px solid #f0f0f0"></div>
<div style="left:882px;top:6px;width:16px;height:769px;background:#c1c1c1;border-radius:8px"></div>
<span class="t" style="left: 23.09px; top: 32px; font-size: 17.47px; line-height: 24px; color: rgb(44, 82, 130); -webkit-text-stroke: 0.79px rgb(44, 82, 130); letter-spacing: 0.863px;">TECHNICAL SKILLS</span>
<div style="left:22px;top:62.1px;width:202px;height:3px;background:#3d7cc9"></div>
<span class="t" style="left: 22.56px; top: 79px; font-size: 16.02px; line-height: 22px; color: rgb(44, 82, 130); -webkit-text-stroke: 0.72px rgb(44, 82, 130); letter-spacing: 0.249px;">Research Areas</span>
<span class="t" style="left: 24px; top: 114px; font-size: 11px; line-height: 14px; color: rgb(74, 85, 104);">•</span>
<span class="t" style="left: 36.4px; top: 111px; font-size: 15.39px; line-height: 21px; color: rgb(74, 85, 104); letter-spacing: 0.381px;">Deep Learning</span>
<span class="t" style="left: 24px; top: 144px; font-size: 11px; line-height: 14px; color: rgb(74, 85, 104);">•</span>
<span class="t" style="left: 36.4px; top: 140px; font-size: 15.39px; line-height: 21px; color: rgb(74, 85, 104); letter-spacing: 0.402px;">Reinforcement Learning</span>
<span class="t" style="left: 24px; top: 172px; font-size: 11px; line-height: 14px; color: rgb(74, 85, 104);">•</span>
<span class="t" style="left: 36.4px; top: 169px; font-size: 15.39px; line-height: 21px; color: rgb(74, 85, 104); letter-spacing: 0.44px;">Probabilistic Models</span>
<span class="t" style="left: 24px; top: 201px; font-size: 11px; line-height: 14px; color: rgb(74, 85, 104);">•</span>
<span class="t" style="left: 36.4px; top: 197px; font-size: 15.39px; line-height: 21px; color: rgb(74, 85, 104); letter-spacing: 0.458px;">Multi-Task Learning</span>
<span class="t" style="left: 24px; top: 230px; font-size: 11px; line-height: 14px; color: rgb(74, 85, 104);">•</span>
<span class="t" style="left: 37.4px; top: 227px; font-size: 15.39px; line-height: 21px; color: rgb(74, 85, 104); letter-spacing: 0.451px;">Zero-Shot Learning</span>
<span class="t" style="left: 24px; top: 259px; font-size: 11px; line-height: 14px; color: rgb(74, 85, 104);">•</span>
<span class="t" style="left: 36.4px; top: 255px; font-size: 15.39px; line-height: 21px; color: rgb(74, 85, 104); letter-spacing: 0.556px;">Neural Architecture</span>
<span class="t" style="left: 37.4px; top: 279px; font-size: 15.39px; line-height: 21px; color: rgb(74, 85, 104); letter-spacing: 0.126px;">Search</span>
<span class="t" style="left: 22.56px; top: 315px; font-size: 16.02px; line-height: 22px; color: rgb(44, 82, 130); -webkit-text-stroke: 0.72px rgb(44, 82, 130); letter-spacing: 0.409px;">Frameworks</span>
<span class="t" style="left: 24px; top: 350px; font-size: 11px; line-height: 14px; color: rgb(74, 85, 104);">•</span>
<span class="t" style="left: 36.4px; top: 346px; font-size: 15.39px; line-height: 21px; color: rgb(74, 85, 104); letter-spacing: 0.451px;">PyTorch</span>
<span class="t" style="left: 24px; top: 379px; font-size: 11px; line-height: 14px; color: rgb(74, 85, 104);">•</span>
<span class="t" style="left: 37.4px; top: 375px; font-size: 15.39px; line-height: 21px; color: rgb(74, 85, 104); letter-spacing: 0.155px;">TensorFlow</span>
<span class="t" style="left: 24px; top: 407px; font-size: 11px; line-height: 14px; color: rgb(74, 85, 104);">•</span>
<span class="t" style="left: 37.4px; top: 404px; font-size: 15.39px; line-height: 21px; color: rgb(74, 85, 104); letter-spacing: -0.324px;">JAX</span>
<span class="t" style="left: 24px; top: 436px; font-size: 11px; line-height: 14px; color: rgb(74, 85, 104);">•</span>
<span class="t" style="left: 36.4px; top: 432px; font-size: 15.39px; line-height: 21px; color: rgb(74, 85, 104); letter-spacing: -0.678px;">Ray</span>
<span class="t" style="left: 22.56px; top: 469px; font-size: 16.02px; line-height: 22px; color: rgb(44, 82, 130); -webkit-text-stroke: 0.72px rgb(44, 82, 130); letter-spacing: 0.615px;">Programming</span>
<span class="t" style="left: 24px; top: 505px; font-size: 11px; line-height: 14px; color: rgb(74, 85, 104);">•</span>
<span class="t" style="left: 36.4px; top: 501px; font-size: 15.39px; line-height: 21px; color: rgb(74, 85, 104); letter-spacing: 0.715px;">Python</span>
<span class="t" style="left: 24px; top: 533px; font-size: 11px; line-height: 14px; color: rgb(74, 85, 104);">•</span>
<span class="t" style="left: 37.4px; top: 529px; font-size: 15.39px; line-height: 21px; color: rgb(74, 85, 104); letter-spacing: -0.092px;">C++</span>
<span class="t" style="left: 24px; top: 562px; font-size: 11px; line-height: 14px; color: rgb(74, 85, 104);">•</span>
<span class="t" style="left: 37.4px; top: 559px; font-size: 15.39px; line-height: 21px; color: rgb(74, 85, 104); letter-spacing: -0.094px;">Julia</span>
<span class="t" style="left: 24px; top: 591px; font-size: 11px; line-height: 14px; color: rgb(74, 85, 104);">•</span>
<span class="t" style="left: 37.4px; top: 588px; font-size: 15.39px; line-height: 21px; color: rgb(74, 85, 104); letter-spacing: -0.774px;">CUDA</span>
<span class="t" style="left: 22.09px; top: 632px; font-size: 17.47px; line-height: 24px; color: rgb(44, 82, 130); -webkit-text-stroke: 0.79px rgb(44, 82, 130); letter-spacing: 0.57px;">RESEARCH IMPACT</span>
<div style="left:22px;top:662.9px;width:202px;height:3px;background:#3d7cc9"></div>
<div style="left:22px;top:680px;width:4px;height:73.5px;background:#3d7cc9"></div>
<span class="t" style="left: 40.84px; top: 682px; font-size: 19.24px; line-height: 26px; color: rgb(44, 82, 130); -webkit-text-stroke: 0.87px rgb(44, 82, 130); letter-spacing: 0.661px;">25+</span>
<span class="t" style="left: 39.1px; top: 711px; font-size: 14.35px; line-height: 19px; color: rgb(74, 85, 104); letter-spacing: 0.574px;">Peer-reviewed</span>
<span class="t" style="left: 40.1px; top: 734px; font-size: 14.35px; line-height: 19px; color: rgb(74, 85, 104); letter-spacing: 0.637px;">publications</span>
<div style="left:22px;top:768px;width:4px;height:51.6px;background:#3d7cc9"></div>
<span class="t" style="left: 40.84px; top: 769px; font-size: 19.24px; line-height: 26px; color: rgb(44, 82, 130); -webkit-text-stroke: 0.87px rgb(44, 82, 130); letter-spacing: 1.121px;">32</span>
<span class="t" style="left: 39.1px; top: 798px; font-size: 14.35px; line-height: 19px; color: rgb(74, 85, 104); letter-spacing: 0.788px;">h-index</span>
<div style="left:22px;top:833px;width:4px;height:51px;background:#3d7cc9"></div>
<span class="t" style="left: 40.84px; top: 835px; font-size: 19.24px; line-height: 26px; color: rgb(44, 82, 130); -webkit-text-stroke: 0.87px rgb(44, 82, 130);">3</span>
<span class="t" style="left: 39.1px; top: 863px; font-size: 14.35px; line-height: 19px; color: rgb(74, 85, 104); letter-spacing: 0.51px;">Best paper awards</span>
<div style="left:22px;top:898px;width:4px;height:52px;background:#3d7cc9"></div>
<span class="t" style="left: 39.84px; top: 900px; font-size: 19.24px; line-height: 26px; color: rgb(44, 82, 130); -webkit-text-stroke: 0.87px rgb(44, 82, 130); letter-spacing: 0.011px;">10+</span>
<span class="t" style="left: 39.1px; top: 930px; font-size: 14.35px; line-height: 19px; color: rgb(74, 85, 104); letter-spacing: 0.603px;">Patents</span>
<span class="t" style="left: 268px; top: 34px; font-size: 34.53px; line-height: 46px; color: rgb(44, 82, 130); font-weight: 700; letter-spacing: -0.73px;">Dr. Rachel Zhang, Ph.D.</span>
<span class="t" style="left: 270px; top: 89px; font-size: 20.8px; line-height: 28px; color: rgb(74, 85, 104); letter-spacing: -0.296px;">Senior AI Research Engineer</span>
<span class="t" style="left: 269px; top: 125px; font-size: 15.5px; line-height: 21px; color: rgb(74, 85, 104); letter-spacing: 0.365px;">New York City Area | rachel.zhang@email.com | (555) 123-4567</span>
<span class="t" style="left: 269px; top: 147px; font-size: 15.5px; line-height: 21px; color: rgb(74, 85, 104); letter-spacing: 0.406px;">linkedin.com/in/rachelzhang | github.com/rzhang-ai |</span>
<span class="t" style="left: 270px; top: 169px; font-size: 15.5px; line-height: 21px; color: rgb(74, 85, 104); letter-spacing: 0.369px;">scholar.google.com/rachelzhang</span>
<div style="left:269.5px;top:204px;width:601.5px;height:3.6px;background:#2c5282"></div>
<span class="t" style="left: 269.39px; top: 235px; font-size: 17.47px; line-height: 24px; color: rgb(44, 82, 130); -webkit-text-stroke: 0.79px rgb(44, 82, 130); letter-spacing: 0.494px;">RESEARCH SUMMARY</span>
<div style="left:269.5px;top:265.6px;width:601.5px;height:3px;background:#3d7cc9"></div>
<span class="t" style="left: 270px; top: 284px; font-size: 15.39px; line-height: 21px; color: rgb(45, 55, 72); letter-spacing: 0.343px;">AI researcher with 12+ years of experience spanning classical machine learning,</span>
<span class="t" style="left: 270px; top: 309px; font-size: 15.39px; line-height: 21px; color: rgb(45, 55, 72); letter-spacing: 0.414px;">deep learning, and probabilistic modeling. Led groundbreaking research in</span>
<span class="t" style="left: 269px; top: 332px; font-size: 15.39px; line-height: 21px; color: rgb(45, 55, 72); letter-spacing: 0.442px;">reinforcement learning, generative models, and multi-task learning. Published 25+</span>
<span class="t" style="left: 270px; top: 355px; font-size: 15.39px; line-height: 21px; color: rgb(45, 55, 72); letter-spacing: 0.362px;">papers in top-tier conferences (NeurIPS, ICML, ICLR). Strong track record of</span>
<span class="t" style="left: 270px; top: 379px; font-size: 15.39px; line-height: 21px; color: rgb(45, 55, 72); letter-spacing: 0.457px;">transitioning theoretical advances into practical applications in both academic and</span>
<span class="t" style="left: 269px; top: 402px; font-size: 15.39px; line-height: 21px; color: rgb(45, 55, 72); letter-spacing: 0.569px;">industrial settings.</span>
<span class="t" style="left: 269.39px; top: 449px; font-size: 17.47px; line-height: 24px; color: rgb(44, 82, 130); -webkit-text-stroke: 0.79px rgb(44, 82, 130); letter-spacing: 0.443px;">PROFESSIONAL EXPERIENCE</span>
<div style="left:269.5px;top:479.2px;width:601.5px;height:3px;background:#3d7cc9"></div>
<span class="t" style="left: 269.4px; top: 497px; font-size: 17.68px; line-height: 24px; color: rgb(44, 82, 130); -webkit-text-stroke: 0.8px rgb(44, 82, 130); letter-spacing: 0.467px;">DeepMind</span>
<span class="t" style="left: 270.1px; top: 524px; font-size: 16.95px; line-height: 23px; color: rgb(45, 55, 72); -webkit-text-stroke: 0.2px rgb(45, 55, 72); letter-spacing: 0.418px;">Senior Research Scientist</span>
<span class="t" style="left: 271px; top: 550px; font-size: 14.56px; line-height: 20px; color: rgb(74, 85, 104); font-style: italic; letter-spacing: 0.255px;">2019 - Present</span>
<div style="left:272.9px;top:588px;width:5px;height:5px;background:#4a5568;border-radius:50%"></div>
<span class="t" style="left: 289.1px; top: 580px; font-size: 15.39px; line-height: 21px; color: rgb(74, 85, 104); letter-spacing: 0.434px;">Lead researcher on large-scale multi-task learning systems, developing novel</span>
<span class="t" style="left: 290.1px; top: 603px; font-size: 15.39px; line-height: 21px; color: rgb(74, 85, 104); letter-spacing: 0.5px;">architectures that improve cross-task generalization by 40%</span>
<div style="left:272.9px;top:640.7px;width:5px;height:5px;background:#4a5568;border-radius:50%"></div>
<span class="t" style="left: 289.1px; top: 632px; font-size: 15.39px; line-height: 21px; color: rgb(74, 85, 104); letter-spacing: 0.474px;">Pioneered new approach to zero-shot learning using contrastive training,</span>
<span class="t" style="left: 290.1px; top: 656px; font-size: 15.39px; line-height: 21px; color: rgb(74, 85, 104); letter-spacing: 0.405px;">published in NeurIPS 2023</span>
<div style="left:272.9px;top:693.1px;width:5px;height:5px;background:#4a5568;border-radius:50%"></div>
<span class="t" style="left: 289.1px; top: 685px; font-size: 15.39px; line-height: 21px; color: rgb(74, 85, 104); letter-spacing: 0.432px;">Built and led team of 6 researchers working on foundational ML models</span>
<div style="left:272.9px;top:722.1px;width:5px;height:5px;background:#4a5568;border-radius:50%"></div>
<span class="t" style="left: 289.1px; top: 714px; font-size: 15.39px; line-height: 21px; color: rgb(74, 85, 104); letter-spacing: 0.428px;">Developed novel regularization techniques for large language models, reducing</span>
<span class="t" style="left: 290.1px; top: 737px; font-size: 15.39px; line-height: 21px; color: rgb(74, 85, 104); letter-spacing: 0.574px;">catastrophic forgetting by 35%</span>
<span class="t" style="left: 270.4px; top: 778px; font-size: 17.68px; line-height: 24px; color: rgb(44, 82, 130); -webkit-text-stroke: 0.8px rgb(44, 82, 130); letter-spacing: 0.093px;">Google Research</span>
<span class="t" style="left: 269.1px; top: 806px; font-size: 16.95px; line-height: 23px; color: rgb(45, 55, 72); -webkit-text-stroke: 0.2px rgb(45, 55, 72); letter-spacing: 0.493px;">Research Scientist</span>
<span class="t" style="left: 271px; top: 831px; font-size: 14.56px; line-height: 20px; color: rgb(74, 85, 104); font-style: italic; letter-spacing: 0.303px;">2015 - 2019</span>
<div style="left:272.9px;top:868.7px;width:5px;height:5px;background:#4a5568;border-radius:50%"></div>
<span class="t" style="left: 289.1px; top: 860px; font-size: 15.39px; line-height: 21px; color: rgb(74, 85, 104); letter-spacing: 0.452px;">Developed probabilistic frameworks for robust ML, published in ICML 2018</span>
<div style="left:272.9px;top:897.3px;width:5px;height:5px;background:#4a5568;border-radius:50%"></div>
<span class="t" style="left: 290.1px; top: 889px; font-size: 15.39px; line-height: 21px; color: rgb(74, 85, 104); letter-spacing: 0.452px;">Created novel attention mechanisms for computer vision models, improving</span>
<span class="t" style="left: 290.1px; top: 912px; font-size: 15.39px; line-height: 21px; color: rgb(74, 85, 104); letter-spacing: 0.507px;">accuracy by 25%</span>
<div style="left:272.9px;top:949.8px;width:5px;height:5px;background:#4a5568;border-radius:50%"></div>
<span class="t" style="left: 289.1px; top: 941px; font-size: 15.39px; line-height: 21px; color: rgb(74, 85, 104); letter-spacing: 0.465px;">Led collaboration with Google Brain team on efficient training methods for</span>
<span class="t" style="left: 290.1px; top: 965px; font-size: 15.39px; line-height: 21px; color: rgb(74, 85, 104); letter-spacing: 0.526px;">transformer models</span>
<div style="left:272.9px;top:1002px;width:5px;height:5px;background:#4a5568;border-radius:50%"></div>
<span class="t" style="left: 289.1px; top: 994px; font-size: 15.39px; line-height: 21px; color: rgb(74, 85, 104); letter-spacing: 0.479px;">Mentored 4 PhD interns and collaborated with academic institutions</span>
<span class="t" style="left: 22.59px; top: 1199px; font-size: 17.47px; line-height: 24px; color: rgb(44, 82, 130); -webkit-text-stroke: 0.79px rgb(44, 82, 130); letter-spacing: 0.838px;">GRANTS &amp; AWARDS</span>
<div style="left:22px;top:1229.9px;width:202px;height:3px;background:#3d7cc9"></div>
<div style="left:22px;top:1246px;width:4px;height:52px;background:#3d7cc9"></div>
<span class="t" style="left: 39.22px; top: 1247px; font-size: 18.72px; line-height: 25px; color: rgb(44, 82, 130); -webkit-text-stroke: 0.85px rgb(44, 82, 130); letter-spacing: -0.478px;">NSF CAREER</span>
<span class="t" style="left: 39.8px; top: 1278px; font-size: 14.35px; line-height: 19px; color: rgb(74, 85, 104); letter-spacing: 0.502px;">Award (2013)</span>
<div style="left:22px;top:1312px;width:4px;height:60px;background:#3d7cc9"></div>
<span class="t" style="left: 40.22px; top: 1313px; font-size: 18.72px; line-height: 25px; color: rgb(44, 82, 130); -webkit-text-stroke: 0.85px rgb(44, 82, 130); letter-spacing: 0.454px;">Google Faculty</span>
<span class="t" style="left: 38.8px; top: 1343px; font-size: 14.35px; line-height: 19px; color: rgb(74, 85, 104); letter-spacing: 0.507px;">Research Award (2014)</span>
<span class="t" style="left: 268.5px; top: 1199px; font-size: 17.47px; line-height: 24px; color: rgb(44, 82, 130); -webkit-text-stroke: 0.79px rgb(44, 82, 130); letter-spacing: 0.653px;">PROFESSIONAL EXPERIENCE (CONTINUED)</span>
<div style="left:269px;top:1229.9px;width:601.7px;height:3px;background:#3d7cc9"></div>
<span class="t" style="left: 270.4px; top: 1248px; font-size: 17.68px; line-height: 24px; color: rgb(44, 82, 130); -webkit-text-stroke: 0.8px rgb(44, 82, 130); letter-spacing: 0.355px;">Columbia University</span>
<span class="t" style="left: 269.1px; top: 1275px; font-size: 16.95px; line-height: 23px; color: rgb(45, 55, 72); -webkit-text-stroke: 0.2px rgb(45, 55, 72); letter-spacing: 0.51px;">Research Assistant Professor</span>
<span class="t" style="left: 271px; top: 1300px; font-size: 14.56px; line-height: 20px; color: rgb(74, 85, 104); font-style: italic; letter-spacing: 0.021px;">2011 - 2015</span>
<div style="left:272.9px;top:1337.9px;width:5px;height:5px;background:#4a5568;border-radius:50%"></div>
<span class="t" style="left: 289.1px; top: 1330px; font-size: 15.39px; line-height: 21px; color: rgb(74, 85, 104); letter-spacing: 0.427px;">Published seminal work on Bayesian optimization methods (cited 1000+ times)</span>
</div>
<div style="left:1849px;top:1718px;width:874px;height:30px;background:#fafafa;border-top:2px solid #ececec"></div>
<div style="left:1855.5px;top:1726.4px;width:834px;height:16px;background:#c1c1c1;border-radius:8px"></div>
<div style="left:2723px;top:1718px;width:29px;height:30px;background:#fafafa"></div>
<div style="left:2634px;top:1462px;width:120px;height:120px;background:#469bd8;border-radius:50%;box-shadow:0 3px 12px rgba(0,0,0,.16)"></div>
<svg style="position:absolute;left:2634px;top:1462px" width="120" height="120" viewBox="0 0 120 120"><path d="M30.4 44.1 L84.5 37.6 L87.9 72.3 L69.8 74.5 L62.2 86.2 L52.7 76.1 L33.9 78.3 Z" fill="#fff"></path></svg>
</div>

</body></html>
